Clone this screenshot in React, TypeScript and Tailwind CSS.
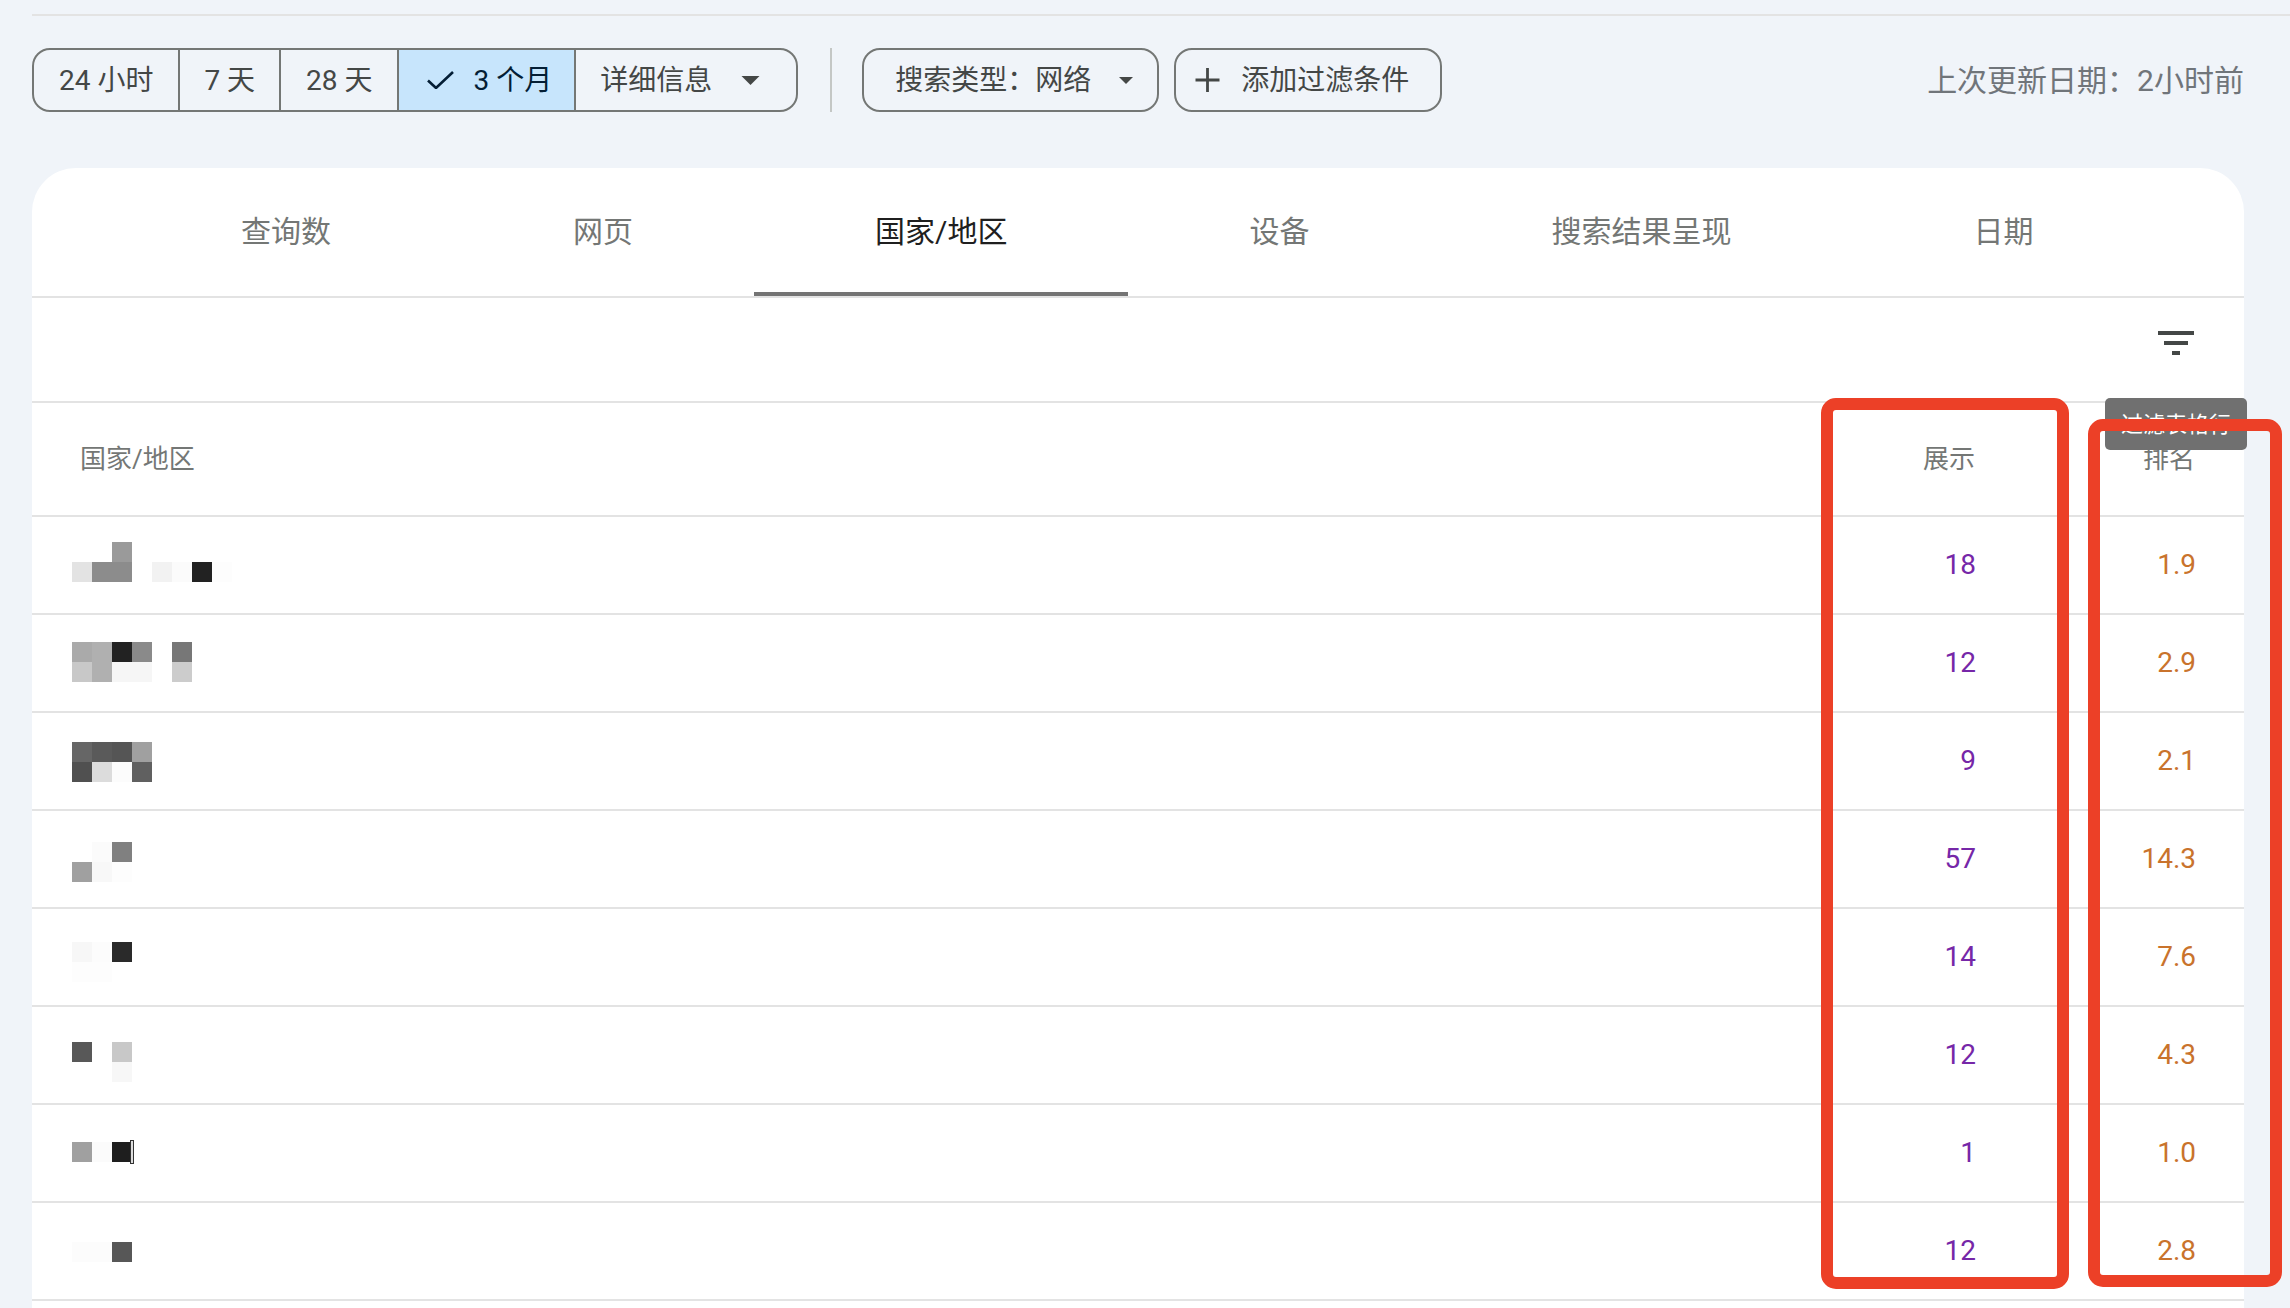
const TABS = [
  { label: "查询数", active: false },
  { label: "网页", active: false },
  { label: "国家/地区", active: true },
  { label: "设备", active: false },
  { label: "搜索结果呈现", active: false },
  { label: "日期", active: false },
];

// blurred country names, 20px mosaic cells
const ROWS = [
  {
    impressions: "18",
    position: "1.9",
    pad: "pt-[25px]",
    cells: [
      "", "", "bg-[#9a9a9a]", "", "", "", "", "",
      "bg-[#e3e3e3]", "bg-[#8c8c8c]", "bg-[#8c8c8c]", "", "bg-[#f2f2f2]", "bg-[#fbfbfb]", "bg-[#222222]", "bg-[#fdfdfd]",
    ],
  },
  {
    impressions: "12",
    position: "2.9",
    pad: "pt-[27px]",
    cells: [
      "bg-[#aaaaaa]", "bg-[#b0b0b0]", "bg-[#222222]", "bg-[#8a8a8a]", "", "bg-[#777777]", "", "",
      "bg-[#c8c8c8]", "bg-[#b0b0b0]", "bg-[#f6f6f6]", "bg-[#f6f6f6]", "", "bg-[#cccccc]", "", "",
    ],
  },
  {
    impressions: "9",
    position: "2.1",
    pad: "pt-[29px]",
    cells: [
      "bg-[#666666]", "bg-[#5a5a5a]", "bg-[#555555]", "bg-[#a0a0a0]", "", "", "", "",
      "bg-[#505050]", "bg-[#dcdcdc]", "bg-[#fcfcfc]", "bg-[#606060]", "", "", "", "",
    ],
  },
  {
    impressions: "57",
    position: "14.3",
    pad: "pt-[31px]",
    cells: [
      "", "bg-[#fbfbfb]", "bg-[#808080]", "", "", "", "", "",
      "bg-[#a0a0a0]", "bg-[#f8f8f8]", "bg-[#fdfdfd]", "", "", "", "", "",
    ],
  },
  {
    impressions: "14",
    position: "7.6",
    pad: "pt-[33px]",
    cells: [
      "bg-[#f7f7f7]", "bg-[#fcfcfc]", "bg-[#2a2a2a]", "", "", "", "", "",
      "bg-[#fdfdfd]", "bg-[#fdfdfd]", "", "", "", "", "", "",
    ],
  },
  {
    impressions: "12",
    position: "4.3",
    pad: "pt-[35px]",
    cells: [
      "bg-[#585858]", "", "bg-[#c8c8c8]", "", "", "", "", "",
      "", "", "bg-[#f7f7f7]", "", "", "", "", "",
    ],
  },
  {
    impressions: "1",
    position: "1.0",
    pad: "pt-[37px]",
    caret: true,
    cells: [
      "bg-[#a0a0a0]", "bg-[#fbfbfb]", "bg-[#1e1e1e]", "", "", "", "", "",
      "", "", "", "", "", "", "", "",
    ],
  },
  {
    impressions: "12",
    position: "2.8",
    pad: "pt-[39px]",
    cells: [
      "bg-[#fcfcfc]", "bg-[#fcfcfc]", "bg-[#575757]", "", "", "", "", "",
      "", "", "", "", "", "", "", "",
    ],
  },
];

function Caret() {
  return (
    <svg viewBox="0 0 20 10" className="block h-full w-full fill-current">
      <path d="M0 0h20L10 10z" />
    </svg>
  );
}

function Chips() {
  return (
    <div className="ml-[32px] mr-[46px] mt-[32px] flex h-[64px] items-center text-[28px] text-[#444746]">
      <div className="flex h-full items-stretch overflow-hidden rounded-[18px] border-2 border-[#747775]">
        <div className="flex items-center border-r-2 border-[#747775] pl-[25px] pr-[25px] pt-[2px]">24 小时</div>
        <div className="flex items-center border-r-2 border-[#747775] pl-[24px] pr-[24px] pt-[2px]">7 天</div>
        <div className="flex items-center border-r-2 border-[#747775] pl-[25px] pr-[24px] pt-[2px]">28 天</div>
        <div className="flex items-center gap-[20px] border-r-2 border-[#747775] bg-[#c7e5fc] pl-[28px] pr-[22px] text-[#041e35]">
          <svg viewBox="0 0 27 18" className="h-[18px] w-[27px]" fill="none" stroke="currentColor" strokeWidth="2.6">
            <path d="M1 9.5l8 7.5L26 1" />
          </svg>
          <span className="pt-[2px]">3 个月</span>
        </div>
        <div className="flex items-center gap-[29px] pl-[24px] pr-[36px]">
          <span className="pt-[2px]">详细信息</span>
          <span className="block h-[9px] w-[19px]"><Caret /></span>
        </div>
      </div>
      <div className="ml-[32px] h-full w-[2px] bg-[#c4c7c5]" />
      <div className="ml-[30px] flex h-full items-center gap-[28px] rounded-[18px] border-2 border-[#747775] pl-[31px] pr-[24px]">
        <span className="pt-[2px]">搜索类型：网络</span>
        <span className="block h-[7px] w-[14px]"><Caret /></span>
      </div>
      <div className="ml-[15px] flex h-full items-center gap-[21px] rounded-[18px] border-2 border-[#747775] pl-[19px] pr-[31px]">
        <svg viewBox="0 0 24 24" className="h-[24px] w-[25px]" fill="currentColor">
          <path d="M10.6 0h2.8v10.6H24v2.8H13.4V24h-2.8V13.4H0v-2.8h10.6z" />
        </svg>
        <span className="pt-[2px]">添加过滤条件</span>
      </div>
      <div className="ml-auto text-[30px] text-[#70757a]">上次更新日期：2小时前</div>
    </div>
  );
}

function Tabs() {
  return (
    <div className="flex h-[130px] border-b-2 border-[#e3e3e3] pl-[88px]">
      {TABS.map((tab) => (
        <div
          key={tab.label}
          className={
            tab.active
              ? "flex items-center border-b-4 border-[#747474] px-[121px] pt-[2px] text-[30px] text-[#1f1f1f]"
              : "flex items-center px-[121px] pb-[2px] text-[30px] text-[#747775]"
          }
        >
          {tab.label}
        </div>
      ))}
    </div>
  );
}

function Mosaic({ cells, caret }: { cells: string[]; caret?: boolean }) {
  return (
    <div className="grid w-[160px] auto-rows-[20px] grid-cols-[repeat(8,20px)]">
      {cells.map((cell, i) => (
        <div key={i} className={"relative " + cell}>
          {caret && i === 2 ? (
            <span className="absolute left-[18px] top-[-2px] h-[24px] w-[4px] border border-[#333333] bg-[#dddddd]" />
          ) : null}
        </div>
      ))}
    </div>
  );
}

export default function App() {
  return (
    <div className="relative flex h-[1308px] w-[2290px] flex-col overflow-hidden bg-[#f0f4f9] font-[Roboto,'Noto_Sans_CJK_SC',sans-serif]">
      <div className="ml-[32px] mt-[14px] h-[2px] bg-[#e3e3e3]" />
      <Chips />

      <div className="ml-[32px] mr-[46px] mt-[56px] flex-1 overflow-hidden rounded-t-[44px] bg-white">
        <Tabs />
        <div className="flex h-[105px] justify-end border-b-2 border-[#e3e3e3] pr-[50px] pt-[33px]">
          <svg viewBox="0 0 36 24" className="h-[24px] w-[36px]" fill="#444746">
            <path d="M0 0h36v4H0zM6 10h24v4H6zM14 20h8v4h-8z" />
          </svg>
        </div>
        <div className="flex h-[114px] items-center border-b-2 border-[#e3e3e3] text-[26px] text-[#747775]">
          <div className="flex-1 pl-[48px]">国家/地区</div>
          <div className="w-[220px] pr-[50px] text-right">展示</div>
          <div className="w-[219px] pr-[49px] text-right">排名</div>
        </div>
        {ROWS.map((row, i) => (
          <div key={i} className="flex h-[98px] border-b-2 border-[#e3e3e3] text-[28px]">
            <div className={"flex-1 pl-[40px] " + row.pad}>
              <Mosaic cells={row.cells} caret={row.caret} />
            </div>
            <div className="flex w-[220px] items-center justify-end pr-[49px] text-[#7627a8]">{row.impressions}</div>
            <div className="flex w-[219px] items-center justify-end pr-[48px] text-[#c9732c]">{row.position}</div>
          </div>
        ))}
      </div>

      <div className="absolute left-[2105px] top-[398px] flex h-[52px] w-[142px] items-center justify-center rounded-[5px] bg-[#707070] text-[22px] text-white">
        过滤表格行
      </div>
      <div className="absolute left-[1821px] top-[398px] h-[891px] w-[248px] rounded-[15px] border-[12px] border-[#ec4027]" />
      <div className="absolute left-[2088px] top-[419px] h-[868px] w-[194px] rounded-[15px] border-[12px] border-[#ec4027]" />
    </div>
  );
}
